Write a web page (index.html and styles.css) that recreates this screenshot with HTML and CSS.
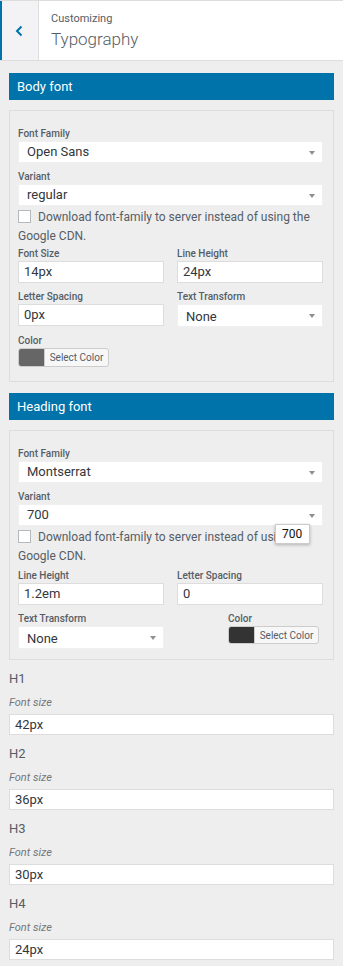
FILE: index.html
```html
<!DOCTYPE html>
<html lang="en">
<head>
    <meta charset="UTF-8">
    <meta name="viewport" content="width=device-width, initial-scale=1.0">
    <title>Typography</title>
    <link rel="stylesheet" href="styles.css">
</head>
<body>
    <div class="header">
        <div class="back">
            <svg width="8" height="12" viewBox="0 0 8 12"><path d="M6.5 1.5 L2 6 L6.5 10.5" fill="none" stroke="#0073aa" stroke-width="2"/></svg>
        </div>
        <div class="title">
            <span class="crumb">Customizing</span>
            <span class="name">Typography</span>
        </div>
    </div>

    <!-- Body font -->
    <div class="section">
        <div class="bar">Body font</div>
        <div class="box">
            <div class="field">
                <div class="label">Font Family</div>
                <div class="select">Open Sans</div>
            </div>
            <div class="field">
                <div class="label">Variant</div>
                <div class="select">regular</div>
            </div>
            <div class="check"><span class="checkbox"></span>Download font-family to server instead of using the Google CDN.</div>
            <div class="row">
                <div class="field">
                    <div class="label">Font Size</div>
                    <div class="input">14px</div>
                </div>
                <div class="field">
                    <div class="label">Line Height</div>
                    <div class="input">24px</div>
                </div>
            </div>
            <div class="row">
                <div class="field">
                    <div class="label">Letter Spacing</div>
                    <div class="input">0px</div>
                </div>
                <div class="field">
                    <div class="label">Text Transform</div>
                    <div class="select tall">None</div>
                </div>
            </div>
            <div class="field">
                <div class="label">Color</div>
                <div class="color-btn"><span class="swatch gray"></span><span class="pick">Select Color</span></div>
            </div>
        </div>
    </div>

    <!-- Heading font -->
    <div class="section">
        <div class="bar">Heading font</div>
        <div class="box last">
            <div class="field">
                <div class="label">Font Family</div>
                <div class="select">Montserrat</div>
            </div>
            <div class="field tip-wrap">
                <div class="label">Variant</div>
                <div class="select">700</div>
                <div class="tooltip">700</div>
            </div>
            <div class="check"><span class="checkbox"></span>Download font-family to server instead of using the Google CDN.</div>
            <div class="row">
                <div class="field">
                    <div class="label">Line Height</div>
                    <div class="input">1.2em</div>
                </div>
                <div class="field">
                    <div class="label">Letter Spacing</div>
                    <div class="input">0</div>
                </div>
            </div>
            <div class="row">
                <div class="field">
                    <div class="label">Text Transform</div>
                    <div class="select tall">None</div>
                </div>
                <div class="field color-col">
                    <div class="label">Color</div>
                    <div class="color-btn short"><span class="swatch dark"></span><span class="pick">Select Color</span></div>
                </div>
            </div>
        </div>
    </div>

    <div class="sizes">
        <div class="size">
            <div class="h">H1</div>
            <div class="sub">Font size</div>
            <div class="input wide">42px</div>
        </div>
        <div class="size">
            <div class="h">H2</div>
            <div class="sub">Font size</div>
            <div class="input wide">36px</div>
        </div>
        <div class="size">
            <div class="h">H3</div>
            <div class="sub">Font size</div>
            <div class="input wide">30px</div>
        </div>
        <div class="size">
            <div class="h">H4</div>
            <div class="sub">Font size</div>
            <div class="input wide">24px</div>
        </div>
    </div>
</body>
</html>
```

FILE: styles.css
```css
* {
    margin: 0;
    padding: 0;
    box-sizing: border-box;
}

body {
    background: #eeeeee;
    font-family: Roboto, "Liberation Sans", sans-serif;
    color: #555d66;
    width: 343px;
}

/* Header */
.header {
    display: flex;
    height: 61px;
    background: #fff;
    border-top: 1px solid #dddddd;
    border-bottom: 1px solid #dddddd;
}

.back {
    width: 39px;
    background: #f3f3f5;
    border-left: 2px solid #0073aa;
    border-right: 1px solid #dddddd;
    display: flex;
    align-items: center;
    justify-content: center;
    padding-right: 3px;
}

.title {
    display: flex;
    flex-direction: column;
    padding-left: 12px;
    padding-top: 11px;
}

.crumb {
    font-size: 11px;
    line-height: 14px;
    color: #555d66;
}

.name {
    font-size: 17px;
    line-height: 26px;
    font-weight: 300;
    color: #555d66;
}

/* Sections */
.section {
    padding: 0 9px;
    margin-top: 12px;
}

.section + .section {
    margin-top: 11px;
}

.bar {
    background: #0073aa;
    color: #fff;
    font-size: 13px;
    height: 27px;
    line-height: 27px;
    padding-left: 8px;
}

.box {
    margin-top: 10px;
    border: 1px solid #dddddd;
    padding: 14px 10px 14px 8px;
}

.box > .field:last-child {
    margin-bottom: 0;
}

.box.last {
    padding-bottom: 5px;
}

.box.last .check {
    margin-bottom: 1px;
}

.field {
    margin-bottom: 5px;
}

.label {
    font-size: 10px;
    font-weight: 500;
    line-height: 14px;
    padding-top: 2px;
    color: #555d66;
}

.select,
.input {
    position: relative;
    background: #fff;
    border: 1px solid #dddddd;
    height: 22px;
    line-height: 20px;
    font-size: 13px;
    color: #32373c;
}

.select {
    border-color: #f0f0f0;
    padding-left: 8px;
}

.select.tall {
    height: 23px;
    line-height: 23px;
}

.select::after {
    content: "";
    position: absolute;
    right: 7px;
    top: 9px;
    border-left: 3px solid transparent;
    border-right: 3px solid transparent;
    border-top: 4px solid #8c8f94;
}

.input {
    padding-left: 5px;
}

.check {
    font-size: 12px;
    line-height: 19px;
    color: #555d66;
    margin-top: -3px;
    margin-bottom: -1px;
}

.checkbox {
    display: inline-block;
    width: 13px;
    height: 13px;
    border: 1px solid #b4b9be;
    background: #fff;
    vertical-align: -2px;
    margin-right: 7px;
}

.row {
    display: grid;
    grid-template-columns: 146px 146px;
    column-gap: 13px;
}

.color-col {
    padding-left: 51px;
}

.color-btn {
    display: flex;
    width: 91px;
    height: 19px;
    border: 1px solid #cccccc;
    border-radius: 3px;
    overflow: hidden;
    background: #f7f7f7;
}

.color-btn.short {
    height: 18px;
}

.swatch {
    width: 25px;
}

.swatch.gray {
    background: #666666;
}

.swatch.dark {
    background: #333333;
}

.pick {
    flex: 1;
    font-size: 10px;
    line-height: 17px;
    text-align: center;
    color: #555d66;
    border-left: 1px solid #cccccc;
}

/* Tooltip over the variant select */
.tip-wrap {
    position: relative;
}

.tooltip {
    position: absolute;
    left: 257px;
    top: 36px;
    width: 35px;
    height: 20px;
    background: #fff;
    border: 1px solid #cccccc;
    box-shadow: 0 1px 3px rgba(0, 0, 0, 0.25);
    font-size: 12px;
    line-height: 18px;
    color: #111;
    padding-left: 6px;
    z-index: 2;
}

/* Heading sizes */
.sizes {
    padding: 0 9px;
}

.size {
    margin-top: 11px;
}

.size:first-child {
    margin-top: 11px;
}

.h {
    font-size: 13px;
    line-height: 16px;
    margin-bottom: 8px;
    color: #555d66;
}

.sub {
    font-size: 11px;
    font-style: italic;
    line-height: 16px;
    margin-bottom: 3px;
    color: #72777c;
}

.input.wide {
    height: 21px;
    line-height: 19px;
}
```
